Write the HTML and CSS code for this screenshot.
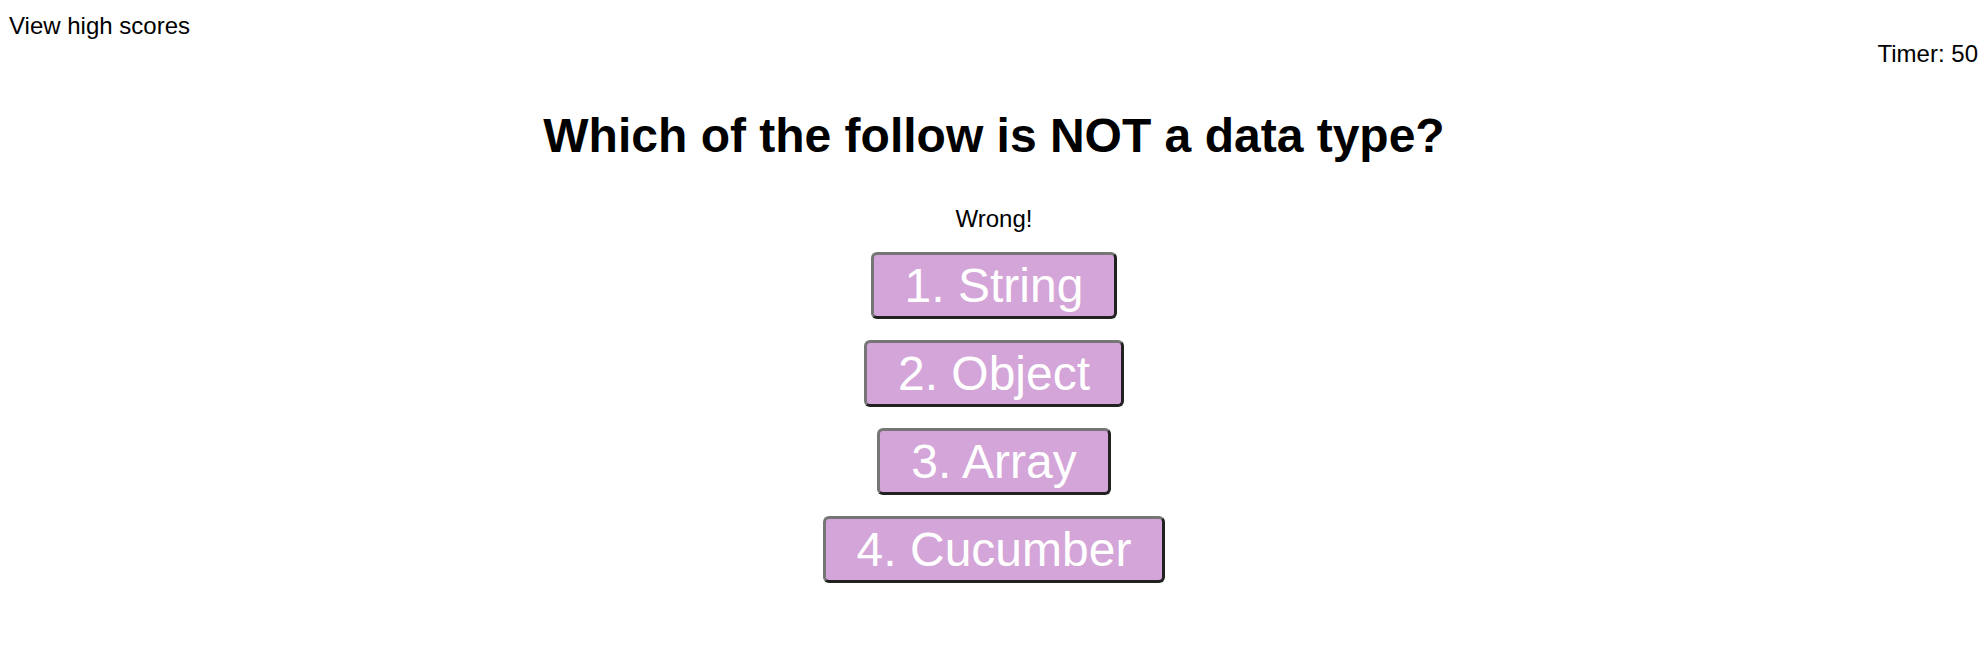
FILE: index.html
```html
<!DOCTYPE html>
<html lang="en">
<head>
  <meta charset="UTF-8">
  <title>Code Quiz</title>
  <link rel="stylesheet" href="styles.css">
</head>
<body>
  <header class="top-bar">
    <a class="high-scores" href="#">View high scores</a>
    <div class="timer">Timer: <span id="time">50</span></div>
  </header>

  <main class="quiz">
    <h1 class="question">Which of the follow is NOT a data type?</h1>
    <p class="feedback">Wrong!</p>

    <!-- answer choices -->
    <div class="choices">
      <button class="choice">1. String</button>
      <button class="choice">2. Object</button>
      <button class="choice">3. Array</button>
      <button class="choice">4. Cucumber</button>
    </div>
  </main>
</body>
</html>
```

FILE: styles.css
```css
:root {
  --text: #000;
  --choice-bg: #d4a5d8;
  --border-light: #767676;
  --border-dark: #222;
}

body {
  font-family: 'Liberation Sans', Arial, sans-serif;
  font-size: 24px;
  color: var(--text);
  background: #fff;
  margin: 0;
}

.top-bar {
  padding: 12px 10px 0 9px;
}

.high-scores {
  display: block;
  color: var(--text);
  text-decoration: none;
}

.timer {
  text-align: right;
}

.quiz {
  text-align: center;
}

.question {
  font-size: 48px;
  font-weight: bold;
  margin: 40px 0 42px;
}

.feedback {
  margin: 0;
}

.choices {
  display: flex;
  flex-direction: column;
  align-items: center;
  gap: 21px;
  margin-top: 19px;
}

.choice {
  font-family: 'Liberation Sans', Arial, sans-serif;
  font-size: 48px;
  color: #fff;
  background: var(--choice-bg);
  padding: 3px 31px;
  border: 3px solid;
  border-color: var(--border-light) var(--border-dark) var(--border-dark) var(--border-light);
  border-radius: 6px;
  cursor: pointer;
}
```
